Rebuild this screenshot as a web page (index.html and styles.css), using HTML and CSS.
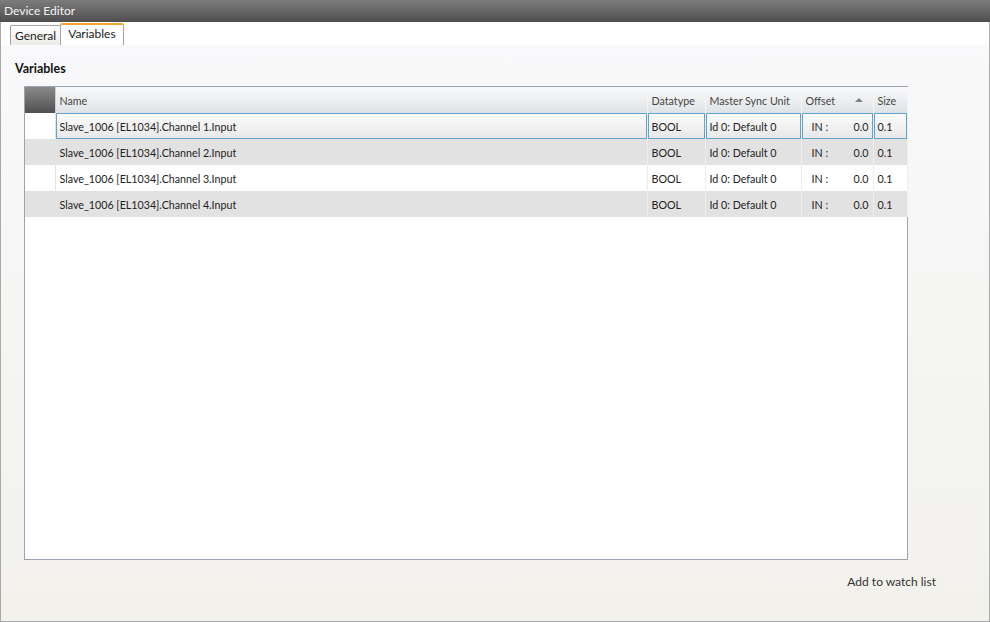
FILE: index.html
```html
<!DOCTYPE html>
<html lang="en">
<head>
    <meta charset="UTF-8">
    <title>Device Editor</title>
    <link rel="stylesheet" href="styles.css">
</head>
<body>
    <div class="window">
        <div class="title-bar">Device Editor</div>

        <div class="tabs">
            <div class="tab">General</div>
            <div class="tab active">Variables</div>
        </div>

        <div class="panel">
            <h2>Variables</h2>

            <div class="grid">
                <table>
                    <colgroup>
                        <col class="c-head">
                        <col class="c-name">
                        <col class="c-type">
                        <col class="c-sync">
                        <col class="c-offset">
                        <col class="c-size">
                    </colgroup>
                    <thead>
                        <tr>
                            <th class="corner"></th>
                            <th>Name</th>
                            <th>Datatype</th>
                            <th>Master Sync Unit</th>
                            <th class="sorted">Offset <span class="sort-arrow"></span></th>
                            <th>Size</th>
                        </tr>
                    </thead>
                    <tbody>
                        <tr class="selected">
                            <td class="row-head"></td>
                            <td>Slave_1006 [EL1034].Channel 1.Input</td>
                            <td>BOOL</td>
                            <td>Id 0: Default 0</td>
                            <td><div class="offset"><span>IN :</span><span>0.0</span></div></td>
                            <td>0.1</td>
                        </tr>
                        <tr class="alt">
                            <td class="row-head"></td>
                            <td>Slave_1006 [EL1034].Channel 2.Input</td>
                            <td>BOOL</td>
                            <td>Id 0: Default 0</td>
                            <td><div class="offset"><span>IN :</span><span>0.0</span></div></td>
                            <td>0.1</td>
                        </tr>
                        <tr>
                            <td class="row-head"></td>
                            <td>Slave_1006 [EL1034].Channel 3.Input</td>
                            <td>BOOL</td>
                            <td>Id 0: Default 0</td>
                            <td><div class="offset"><span>IN :</span><span>0.0</span></div></td>
                            <td>0.1</td>
                        </tr>
                        <tr class="alt">
                            <td class="row-head"></td>
                            <td>Slave_1006 [EL1034].Channel 4.Input</td>
                            <td>BOOL</td>
                            <td>Id 0: Default 0</td>
                            <td><div class="offset"><span>IN :</span><span>0.0</span></div></td>
                            <td>0.1</td>
                        </tr>
                    </tbody>
                </table>
            </div>

            <div class="actions">
                <span class="link-button">Add to watch list</span>
            </div>
        </div>
    </div>
</body>
</html>
```

FILE: styles.css
```css
body {
    margin: 0;
    font-family: Lato, 'Noto Sans', sans-serif;
    font-size: 12px;
    color: #222;
    background: #fff;
}

.window {
    width: 990px;
    height: 622px;
    box-sizing: border-box;
    border: 1px solid #a9a9a9;
    border-top: none;
    display: flex;
    flex-direction: column;
}

.title-bar {
    height: 22px;
    line-height: 22px;
    padding-left: 4px;
    color: #f4f4f4;
    background: linear-gradient(#7c7c7c, #4e4e4e);
    margin: 0 -1px;
}

/* Tab strip */
.tabs {
    display: flex;
    align-items: flex-end;
    height: 23px;
    padding-left: 9px;
    background: #fff;
}

.tab {
    height: 19px;
    line-height: 20px;
    padding: 0 4px;
    border: 1px solid #a4a4a4;
    border-bottom: none;
    border-radius: 2px 2px 0 0;
    background: linear-gradient(#ffffff, #ecebe6);
    color: #222;
}

.tab.active {
    height: 20px;
    line-height: 18px;
    padding: 0 7px;
    border-top: 2px solid #f2a533;
    background: #fff;
    margin-left: -1px;
}

/* Content panel */
.panel {
    flex: 1;
    display: flex;
    flex-direction: column;
    padding-left: 14px;
    background: linear-gradient(#f9f9fb, #f2f1ec);
}

h2 {
    margin: 16px 0 10px;
    font-size: 12.5px;
    font-weight: bold;
    color: #111;
}

.grid {
    margin-left: 9px;
    width: 884px;
    height: 474px;
    box-sizing: border-box;
    border: 1px solid #9aa4ae;
    background: #fff;
}

table {
    border-collapse: collapse;
    table-layout: fixed;
    width: 882px;
    font-size: 10.7px;
}

.c-head { width: 30px; }
.c-name { width: 592px; }
.c-type { width: 58px; }
.c-sync { width: 96px; }
.c-offset { width: 72px; }
.c-size { width: 34px; }

th {
    height: 26px;
    padding: 0 4px;
    text-align: left;
    font-weight: normal;
    color: #454545;
    background: linear-gradient(#f9fafb, #dfe2e5);
    border-right: 1px solid #f4f5f6;
    white-space: nowrap;
}

th.corner {
    background: linear-gradient(#8a8a8a, #505050);
    border-right: 1px solid #d0d0d0;
}

th.sorted {
    position: relative;
}

.sort-arrow {
    position: absolute;
    right: 10px;
    top: 11px;
    border-left: 4px solid transparent;
    border-right: 4px solid transparent;
    border-bottom: 4px solid #7d8287;
}

td {
    height: 26px;
    padding: 0 4px;
    white-space: nowrap;
    overflow: hidden;
    border-right: 1px solid #ededed;
}

td.row-head {
    border-right: 1px solid #e4e4e4;
}

tr.alt td {
    background: #e2e2e2;
}

tr.selected td {
    background: linear-gradient(#fcfcfc, #e7e7e7);
    box-shadow: inset 0 0 0 1px #63a5cd;
}

tr.selected td.row-head {
    background: #fff;
    box-shadow: none;
}

.offset {
    display: flex;
    justify-content: space-between;
    padding-left: 6px;
}

.actions {
    display: flex;
    justify-content: flex-end;
    padding: 14px 53px 0 0;
}

.link-button {
    color: #333;
}
```
